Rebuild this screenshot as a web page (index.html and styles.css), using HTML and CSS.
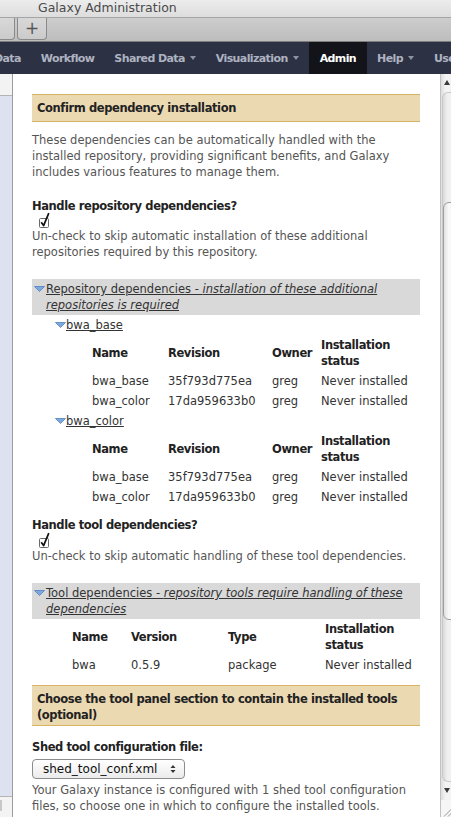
FILE: index.html
```html
<!DOCTYPE html>
<html>
<head>
<meta charset="utf-8">
<title>Galaxy Administration</title>
<link rel="stylesheet" href="styles.css">
</head>
<body>
<div class="window">
  <div class="titlebar">Galaxy Administration</div>
  <div class="tabbar">
    <div class="tab tab-left"></div>
    <div class="tab tab-new">+</div>
  </div>
  <nav class="masthead">
    <span class="nav-item first">Data</span>
    <span class="nav-item">Workflow</span>
    <span class="nav-item">Shared Data<i class="caret"></i></span>
    <span class="nav-item">Visualization<i class="caret"></i></span>
    <span class="nav-item active">Admin</span>
    <span class="nav-item">Help<i class="caret"></i></span>
    <span class="nav-item">User</span>
  </nav>
  <div class="workspace">
    <aside class="left-panel">
      <div class="lp-top"></div>
      <div class="lp-mid"></div>
      <div class="lp-bottom"><span class="lp-mark"></span></div>
    </aside>
    <main class="center">
      <div class="form-title">Confirm dependency installation</div>
      <p class="intro">These dependencies can be automatically handled with the installed repository, providing significant benefits, and Galaxy includes various features to manage them.</p>

      <div class="form-row">
        <div class="label">Handle repository dependencies?</div>
        <div class="check"><svg width="14" height="16" viewBox="0 0 14 16"><rect x="0.5" y="6.5" width="9" height="9" rx="1" fill="#fff" stroke="#6a6a6a"/><path d="M2.2 10.2 L4.6 13.6 L9.8 1.2" fill="none" stroke="#111" stroke-width="1.7" stroke-linejoin="round"/></svg></div>
        <div class="hint">Un-check to skip automatic installation of these additional repositories required by this repository.</div>
      </div>

      <div class="folder-head">
        <svg class="tri" width="11" height="6" viewBox="0 0 11 6"><path d="M0.5 0.5 H10.5 L5.5 5.5 Z" fill="#7ea9de" stroke="#4f80c2" stroke-width="0.8"/></svg>
        <a class="folder-link">Repository dependencies - <em>installation of these additional repositories is required</em></a>
      </div>

      <div class="repo">
        <svg class="tri" width="11" height="6" viewBox="0 0 11 6"><path d="M0.5 0.5 H10.5 L5.5 5.5 Z" fill="#7ea9de" stroke="#4f80c2" stroke-width="0.8"/></svg>
        <a class="repo-link">bwa_base</a>
      </div>
      <table class="dep-table repo-table">
        <colgroup><col class="c-name"><col class="c-rev"><col class="c-owner"><col></colgroup>
        <tr><th>Name</th><th>Revision</th><th>Owner</th><th>Installation status</th></tr>
        <tr><td>bwa_base</td><td>35f793d775ea</td><td>greg</td><td>Never installed</td></tr>
        <tr><td>bwa_color</td><td>17da959633b0</td><td>greg</td><td>Never installed</td></tr>
      </table>

      <div class="repo">
        <svg class="tri" width="11" height="6" viewBox="0 0 11 6"><path d="M0.5 0.5 H10.5 L5.5 5.5 Z" fill="#7ea9de" stroke="#4f80c2" stroke-width="0.8"/></svg>
        <a class="repo-link">bwa_color</a>
      </div>
      <table class="dep-table repo-table">
        <colgroup><col class="c-name"><col class="c-rev"><col class="c-owner"><col></colgroup>
        <tr><th>Name</th><th>Revision</th><th>Owner</th><th>Installation status</th></tr>
        <tr><td>bwa_base</td><td>35f793d775ea</td><td>greg</td><td>Never installed</td></tr>
        <tr><td>bwa_color</td><td>17da959633b0</td><td>greg</td><td>Never installed</td></tr>
      </table>

      <div class="form-row tight">
        <div class="label">Handle tool dependencies?</div>
        <div class="check"><svg width="14" height="16" viewBox="0 0 14 16"><rect x="0.5" y="6.5" width="9" height="9" rx="1" fill="#fff" stroke="#6a6a6a"/><path d="M2.2 10.2 L4.6 13.6 L9.8 1.2" fill="none" stroke="#111" stroke-width="1.7" stroke-linejoin="round"/></svg></div>
        <div class="hint">Un-check to skip automatic handling of these tool dependencies.</div>
      </div>

      <div class="folder-head tool-head">
        <svg class="tri" width="11" height="6" viewBox="0 0 11 6"><path d="M0.5 0.5 H10.5 L5.5 5.5 Z" fill="#7ea9de" stroke="#4f80c2" stroke-width="0.8"/></svg>
        <a class="folder-link">Tool dependencies - <em>repository tools require handling of these dependencies</em></a>
      </div>
      <table class="dep-table tool-table">
        <colgroup><col class="c-tname"><col class="c-ver"><col class="c-type"><col></colgroup>
        <tr><th>Name</th><th>Version</th><th>Type</th><th>Installation status</th></tr>
        <tr><td>bwa</td><td>0.5.9</td><td>package</td><td>Never installed</td></tr>
      </table>

      <div class="form-title second">Choose the tool panel section to contain the installed tools (optional)</div>

      <div class="form-row select-row">
        <div class="label">Shed tool configuration file:</div>
        <div class="select">
          <span>shed_tool_conf.xml</span>
          <svg class="arrows" width="6" height="10" viewBox="0 0 6 10"><path d="M0.5 4 L3 1 L5.5 4 Z M0.5 6 L3 9 L5.5 6 Z" fill="#333"/></svg>
        </div>
        <div class="hint after-select">Your Galaxy instance is configured with 1 shed tool configuration files, so choose one in which to configure the installed tools.</div>
      </div>
    </main>
    <div class="scrollbar">
      <div class="sb-btn sb-up"><i class="sb-arrow-up"></i></div>
      <div class="sb-track"><div class="sb-thumb"></div></div>
      <div class="sb-btn sb-down"><i class="sb-arrow-down"></i></div>
      <div class="sb-corner"><svg width="11" height="17" viewBox="0 0 11 17"><path d="M3 16.5 L11 8.5 M7 16.5 L11 12.5" stroke="#9a9a9a" stroke-width="1"/></svg></div>
    </div>
  </div>
</div>
</body>
</html>
```
FILE: styles.css
```css
* { box-sizing: border-box; }
html, body { margin: 0; padding: 0; }
body {
  width: 451px;
  height: 817px;
  overflow: hidden;
  background: #fff;
  font-family: "DejaVu Sans", "Liberation Sans", sans-serif;
}
.window { display: flex; flex-direction: column; height: 817px; }

/* browser chrome */
.titlebar {
  height: 17px;
  padding-left: 38px;
  background: linear-gradient(#ececec, #dddddd);
  color: #4a4a4a;
  font-size: 12.5px;
  line-height: 15px;
  white-space: nowrap;
  overflow: hidden;
}
.tabbar {
  height: 25px;
  display: flex;
  align-items: flex-start;
  gap: 2px;
  background: linear-gradient(#cdcdcd, #bdbdbd);
  border-top: 1px solid #a5a5a5;
  border-bottom: 1px solid #7d7d7d;
}
.tab {
  height: 22px;
  background: linear-gradient(#d8d8d8, #cbcbcb);
  border: 1px solid #8a8a8a;
  border-top: none;
}
.tab-left { width: 15px; border-left: none; border-radius: 0 0 4px 0; }
.tab-new {
  width: 30px;
  border-radius: 0 0 4px 4px;
  color: #555;
  font-size: 17px;
  line-height: 20px;
  text-align: center;
}

/* masthead */
.masthead {
  height: 32px;
  display: flex;
  background: #2c3143;
  overflow: hidden;
  white-space: nowrap;
}
.nav-item {
  display: flex;
  align-items: center;
  padding: 0 10px;
  color: #aeb3c1;
  font-size: 11px;
  font-weight: bold;
  letter-spacing: -0.6px;
}
.nav-item.first { margin-left: -16px; }
.nav-item.active { background: #121419; color: #fff; padding: 0 11px; }
.caret {
  display: inline-block;
  margin-left: 5px;
  border-top: 4px solid #8d93a3;
  border-left: 3px solid transparent;
  border-right: 3px solid transparent;
}

/* workspace */
.workspace { flex: 1; display: flex; min-height: 0; }
.left-panel {
  width: 13px;
  display: flex;
  flex-direction: column;
  border-right: 1px solid #9c9c9c;
}
.lp-top { height: 22px; background: #f3f3f3; border-bottom: 1px solid #b4b4b4; }
.lp-mid { flex: 1; background: #dee2f0; }
.lp-bottom { height: 21px; background: #f3f3f3; border-top: 1px solid #b4b4b4; padding-top: 3px; }
.lp-mark { display: block; width: 2px; height: 11px; background: #c8c8c8; }

.center {
  flex: 1;
  padding: 20px 20px 0 19px;
  overflow: hidden;
  color: #333;
  font-size: 11.5px;
  line-height: 16px;
}
.form-title {
  background: #ebd9b2;
  border-top: 1px solid #d8b365;
  border-bottom: 1px solid #d8b365;
  padding: 5px 5px;
  color: #222;
  font-weight: bold;
  letter-spacing: -0.4px;
}
.form-title.second { margin-top: 10px; padding: 5px 5px 2px; }
.intro { margin: 10px 0 0; color: #555; }
.form-row { margin-top: 18px; }
.form-row.tight { margin-top: 10px; }
.form-row.select-row { margin-top: 13px; }
.label { color: #222; font-weight: bold; letter-spacing: -0.4px; }
.check { display: flex; align-items: flex-end; height: 14px; padding-left: 7px; }
.form-row.tight .check { height: 15px; }
.check svg { flex: none; }
.hint { color: #555; }

.folder-head {
  margin-top: 19px;
  display: flex;
  align-items: flex-start;
  padding: 2px 0 2px 2px;
  background: #d9d9d9;
}
.folder-head.tool-head { margin-top: 19px; }
.tri { flex: none; margin-top: 5px; }
.folder-link { margin-left: 1px; color: #333; text-decoration: underline; }
.folder-link em { font-style: italic; }
.repo { display: flex; align-items: flex-start; padding: 2px 0 2px 23px; }
.repo-link { color: #333; text-decoration: underline; }

.dep-table { border-collapse: collapse; table-layout: fixed; }
.dep-table th, .dep-table td {
  padding: 2px 0;
  text-align: left;
  vertical-align: middle;
  line-height: 16px;
  font-size: 11.5px;
}
.dep-table th { color: #222; font-weight: bold; letter-spacing: -0.4px; }
.dep-table td { color: #333; }
.repo-table { margin-left: 60px; width: 328px; }
.c-name { width: 76px; }
.c-rev { width: 104px; }
.c-owner { width: 49px; }
.tool-table { margin-left: 40px; width: 348px; }
.c-tname { width: 59px; }
.c-ver { width: 97px; }
.c-type { width: 97px; }

.select {
  margin-top: 4px;
  width: 153px;
  height: 20px;
  display: flex;
  align-items: center;
  padding-left: 10px;
  border: 1px solid #8c8c8c;
  border-radius: 4px;
  background: linear-gradient(#ffffff, #ebebeb);
  color: #111;
  font-size: 12px;
}
.select .arrows { margin-left: auto; margin-right: 8px; }
.hint.after-select { margin-top: 3px; }

/* scrollbar */
.scrollbar {
  width: 11px;
  display: flex;
  flex-direction: column;
  overflow: hidden;
  border-left: 1px solid #c2c2c2;
  background: linear-gradient(to right, #dedede, #f3f3f3 45%, #f3f3f3);
}
.sb-btn { height: 18px; padding: 6px 0 0 3px; }
.sb-arrow-up, .sb-arrow-down {
  display: block;
  width: 0;
  height: 0;
  border-left: 3px solid transparent;
  border-right: 3px solid transparent;
}
.sb-arrow-up { border-bottom: 5px solid #3a3a3a; }
.sb-arrow-down { border-top: 5px solid #3a3a3a; }
.sb-track {
  flex: 1;
  margin-left: 1px;
  border-top: 1px solid #c9c9c9;
  border-left: 1px solid #c9c9c9;
  border-bottom: 1px solid #c9c9c9;
  border-radius: 6px 0 0 6px;
  background: linear-gradient(to right, #d9d9d9, #eeeeee 50%, #f2f2f2);
  padding-top: 109px;
}
.sb-thumb {
  height: 418px;
  width: 14px;
  border: 1px solid #9e9e9e;
  border-radius: 6px 0 0 6px;
  background: linear-gradient(to right, #e0e0e0, #fafafa 40%, #f4f4f4);
}
.sb-corner { height: 17px; background: #f6f6f6; }
.sb-corner svg { display: block; }
```
